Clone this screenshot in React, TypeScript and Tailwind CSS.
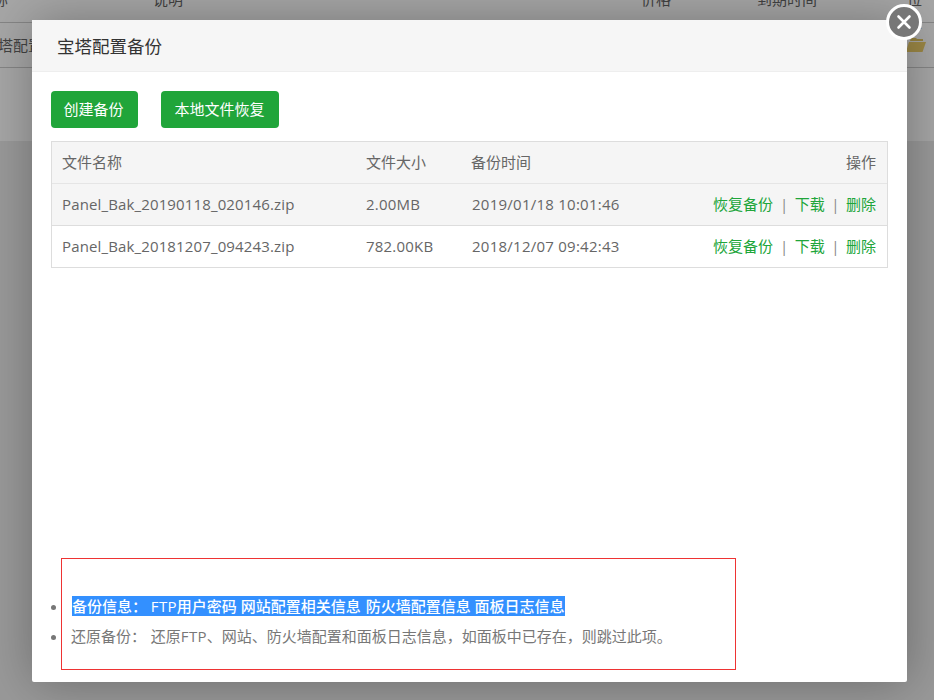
export default function App() {
  const font = { fontFamily: '"Open Sans", "Noto Sans CJK SC", sans-serif' };
  const rows = [
    ["Panel_Bak_20190118_020146.zip", "2.00MB", "2019/01/18 10:01:46", "bg-[#f5f5f5] h-[42px] border-b border-[#ddd]"],
    ["Panel_Bak_20181207_094243.zip", "782.00KB", "2018/12/07 09:42:43", "bg-white h-[41px]"],
  ];
  return (
    <div style={font} className="relative w-[934px] h-[700px] overflow-hidden bg-[#ececec] text-[15px] text-[#666]">
      <div className="bg-white h-[141px] overflow-hidden">
        <div className="flex h-[23px] border-b border-[#ccc]">
          <div className="relative w-full -mt-[12px]">
            <span className="absolute left-[-22px]">名称</span>
            <span className="absolute left-[153px]">说明</span>
            <span className="absolute left-[641px]">价格</span>
            <span className="absolute left-[757px]">到期时间</span>
            <span className="absolute left-[907px]">位置</span>
          </div>
        </div>
        <div className="flex items-center justify-between h-[45px] border-b border-[#ccc] -ml-[17px] pr-[8px]">
          <span>宝塔配置备份</span>
          <svg width="20" height="16" viewBox="0 0 20 16" className="-mt-[1px]">
            <path d="M4 4 L5 1 H10 L11 2 H17 L17 4 Z" fill="#e2c763" />
            <path d="M3 5 H20 L16.5 15 H0 Z" fill="#efd06a" />
          </svg>
        </div>
      </div>

      <div className="absolute inset-0 bg-black/35" />

      <div className="absolute inset-0 pl-[32px] pt-[20px]">
        <div className="relative w-[875px] h-[662px] flex flex-col bg-white rounded-[2px] shadow-[1px_1px_50px_rgba(0,0,0,0.3)]">
          <div className="h-[52px] pl-[25px] pt-[2px] flex items-center bg-[#f6f6f6] border-b border-[#eee] text-[#333] text-[17.5px] shrink-0">
            宝塔配置备份
          </div>
          <div className="flex-1 flex flex-col px-[19px] pt-[19px] pb-[12px]">
            <div className="flex gap-[23px]">
              <button className="w-[87px] h-[37px] pr-[2px] bg-[#20a53a] text-white rounded-[4px]">创建备份</button>
              <button className="w-[118px] h-[37px] pr-[1px] bg-[#20a53a] text-white rounded-[4px]">本地文件恢复</button>
            </div>
            <div className="mt-[13px] w-[837px] border border-[#ddd]">
              <div className="flex items-center h-[42px] pl-[10px] pr-[11px] bg-[#f5f5f5] border-b border-[#e5e5e5]">
                <span className="w-[304px]">文件名称</span>
                <span className="w-[105px]">文件大小</span>
                <span className="flex-1">备份时间</span>
                <span>操作</span>
              </div>
              {rows.map((r) => (
                <div key={r[0]} className={`flex items-center pl-[10px] pr-[11px] ${r[3]}`}>
                  <span className="w-[304px] tracking-[0.14px]">{r[0]}</span>
                  <span className="w-[105px] tracking-[0.2px]">{r[1]}</span>
                  <span className="flex-1 pl-[1px] tracking-[0.25px]">{r[2]}</span>
                  <span className="text-[#20a53a]">恢复备份</span>
                  <span className="ml-[7px] mr-[6.5px] text-[#888]">|</span>
                  <span className="text-[#20a53a]">下载</span>
                  <span className="mx-[6.5px] text-[#888]">|</span>
                  <span className="text-[#20a53a]">删除</span>
                </div>
              ))}
            </div>
            <div className="mt-auto ml-[10px] w-[675px] h-[112px] border border-[#e33] pt-[32px]">
              <ul className="list-disc leading-[30px] whitespace-pre">
                <li className="ml-[6px] pl-[4px] text-[#777]">
                  <span className="bg-[#3390ff] text-white font-medium">
                    备份信息：<span className="tracking-[-2px]">  </span>
                    <span className="tracking-[0.33px]">FTP</span>用户密码 网站配置相关信息<span className="tracking-[1px]"> </span>防火墙配置信息 面板日志信息
                  </span>
                </li>
                <li className="ml-[6px] pl-[3px] text-[#777]">
                  还原备份：<span className="tracking-[-1.5px]">  </span>还原<span className="tracking-[0.33px]">FTP</span>、网站、防火墙配置和面板日志信息，如面板中已存在，则跳过此项。
                </li>
              </ul>
            </div>
          </div>
          <button className="absolute right-[-15px] top-[-16px] w-[36px] h-[36px] rounded-full bg-[#777] border-[3px] border-white flex items-center justify-center">
            <svg width="16" height="16" viewBox="0 0 16 16">
              <path d="M2.5 2.5 L13.5 13.5 M13.5 2.5 L2.5 13.5" stroke="white" strokeWidth="2.6" strokeLinecap="round" />
            </svg>
          </button>
        </div>
      </div>
    </div>
  );
}
